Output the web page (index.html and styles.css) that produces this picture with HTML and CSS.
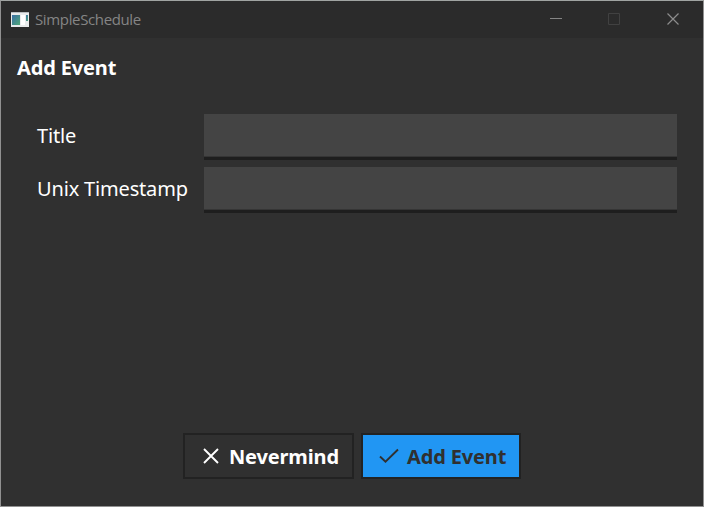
FILE: index.html
```html
<!DOCTYPE html>
<html lang="en">
<head>
<meta charset="utf-8">
<title>SimpleSchedule</title>
<link rel="stylesheet" href="styles.css">
</head>
<body>
<div class="window">
  <header class="titlebar">
    <svg class="app-icon" width="18" height="15" viewBox="0 0 18 15">
      <defs><linearGradient id="g" x1="0" y1="0" x2="1" y2="1"><stop offset="0" stop-color="#3b6fa5"/><stop offset="1" stop-color="#4fa878"/></linearGradient></defs>
      <path fill="#e9ebec" d="M0 0h18v15H0z"/><path fill="#b9bdc0" d="M0 0h18v1H0z"/>
      <path fill="url(#g)" d="M1 3h8v10H1z"/><path fill="#fff" d="M10 3h4v10h-4z"/>
      <path fill="url(#g)" d="M15 3h2v6h-2z"/>
    </svg>
    <span class="app-name">SimpleSchedule</span>
    <div class="controls">
      <svg width="12" height="12"><path d="M0 5.5h12" stroke="#858585"/></svg>
      <svg width="12" height="12"><path d="M.5.5h11v11H.5z" fill="none" stroke="#414141"/></svg>
      <svg class="close" width="12" height="12"><path d="M.5.5l11 11M11.5.5l-11 11" stroke="#8c8c8c" stroke-width="1.2"/></svg>
    </div>
  </header>
  <main class="content">
    <h1 class="heading">Add Event</h1>
    <form class="form">
      <label for="title">Title</label><input id="title" class="field" type="text">
      <label for="time">Unix Timestamp</label><input id="time" class="field" type="text">
    </form>
    <div class="actions">
      <button class="button cancel" type="button">
        <svg width="16" height="16" fill="none" stroke="currentColor" stroke-width="1.9"><path d="M1 1l14 14M15 1L1 15"/></svg>
        <span>Nevermind</span>
      </button>
      <button class="button confirm" type="button">
        <svg width="20" height="16" fill="none" stroke="currentColor" stroke-width="1.9"><path d="M1 8.5l5.5 5.2L19 1.5"/></svg>
        <span>Add Event</span>
      </button>
    </div>
  </main>
</div>
</body>
</html>
```
FILE: styles.css
```css
* { box-sizing: border-box; }
body { margin: 0; font-family: "Noto Sans", sans-serif; }
.window {
  width: 704px;
  height: 507px;
  display: flex;
  flex-direction: column;
  border: 1px solid #919191;
  border-top-color: #a0a4a2;
  background: #303030;
  color: #fff;
}
.titlebar {
  height: 37px;
  display: flex;
  align-items: center;
  padding: 0 24px 1px 10px;
  background: #2b2b2b;
}
.app-icon { margin-right: 6px; }
.app-name {
  color: #858585;
  font: 15px/20px "Open Sans", sans-serif;
  letter-spacing: -0.36px;
}
.controls {
  display: flex;
  gap: 46px;
  margin-left: auto;
}
.close { margin-left: 1px; }
.content {
  flex: 1;
  display: flex;
  flex-direction: column;
}
.heading {
  margin: 16px 0 0 16px;
  font-size: 20px;
  line-height: 28px;
  font-weight: 700;
  letter-spacing: -0.15px;
}
.form {
  display: grid;
  grid-template-columns: 167px 473px;
  row-gap: 7px;
  margin: 32px 0 0 36px;
  font-size: 20px;
  letter-spacing: -0.17px;
}
.form label {
  height: 46px;
  line-height: 44px;
}
.field {
  height: 46px;
  border: 0;
  border-bottom: 3px solid #1e1e1e;
  outline: 0;
  padding: 0 10px;
  border-radius: 0;
  background: linear-gradient(#444 42px, #353535 42px);
  color: #fff;
  font: inherit;
}
.actions {
  display: flex;
  gap: 7px;
  margin: auto 0 27px 182px;
}
.button {
  height: 46px;
  display: flex;
  align-items: center;
  padding: 0;
  border: 2px solid #222;
  font: 700 20px/28px "Noto Sans", sans-serif;
  letter-spacing: -0.15px;
}
.button span { padding-top: 2px; }
.cancel {
  width: 171px;
  padding-left: 18px;
  gap: 10px;
  background: #303030;
  color: #fff;
}
.confirm {
  width: 160px;
  padding-left: 16px;
  gap: 8px;
  background: #2196f3;
  color: #303030;
}
```
